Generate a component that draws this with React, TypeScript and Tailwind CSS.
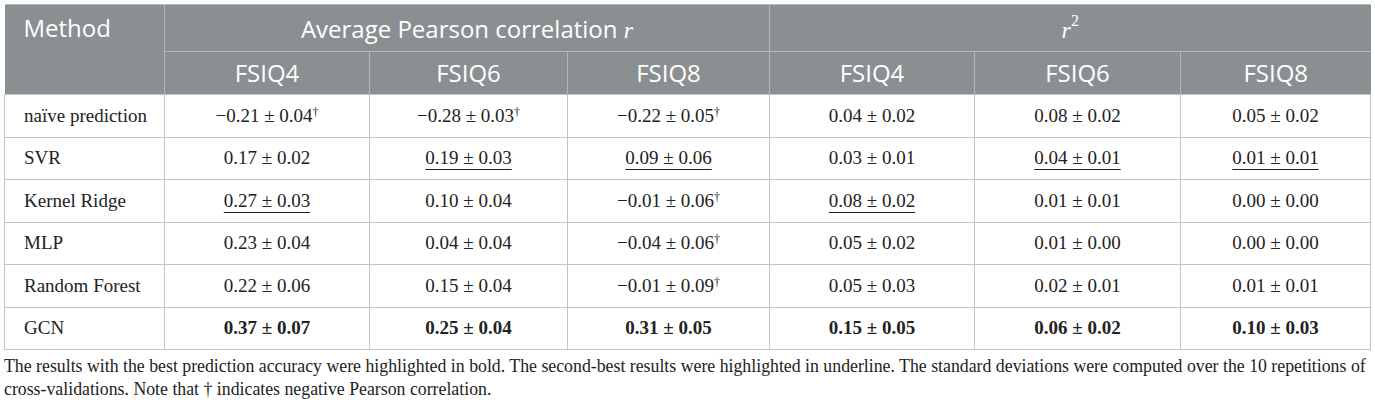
import React from "react";

type Cell = {
  v: string;
  dag?: boolean;
  u?: boolean;
};

type Row = {
  name: string;
  cells: Cell[];
  bold?: boolean;
};

const rows: Row[] = [
  {
    name: "naïve prediction",
    cells: [
      { v: "−0.21 ± 0.04", dag: true },
      { v: "−0.28 ± 0.03", dag: true },
      { v: "−0.22 ± 0.05", dag: true },
      { v: "0.04 ± 0.02" },
      { v: "0.08 ± 0.02" },
      { v: "0.05 ± 0.02" },
    ],
  },
  {
    name: "SVR",
    cells: [
      { v: "0.17 ± 0.02" },
      { v: "0.19 ± 0.03", u: true },
      { v: "0.09 ± 0.06", u: true },
      { v: "0.03 ± 0.01" },
      { v: "0.04 ± 0.01", u: true },
      { v: "0.01 ± 0.01", u: true },
    ],
  },
  {
    name: "Kernel Ridge",
    cells: [
      { v: "0.27 ± 0.03", u: true },
      { v: "0.10 ± 0.04" },
      { v: "−0.01 ± 0.06", dag: true },
      { v: "0.08 ± 0.02", u: true },
      { v: "0.01 ± 0.01" },
      { v: "0.00 ± 0.00" },
    ],
  },
  {
    name: "MLP",
    cells: [
      { v: "0.23 ± 0.04" },
      { v: "0.04 ± 0.04" },
      { v: "−0.04 ± 0.06", dag: true },
      { v: "0.05 ± 0.02" },
      { v: "0.01 ± 0.00" },
      { v: "0.00 ± 0.00" },
    ],
  },
  {
    name: "Random Forest",
    cells: [
      { v: "0.22 ± 0.06" },
      { v: "0.15 ± 0.04" },
      { v: "−0.01 ± 0.09", dag: true },
      { v: "0.05 ± 0.03" },
      { v: "0.02 ± 0.01" },
      { v: "0.01 ± 0.01" },
    ],
  },
  {
    name: "GCN",
    bold: true,
    cells: [
      { v: "0.37 ± 0.07" },
      { v: "0.25 ± 0.04" },
      { v: "0.31 ± 0.05" },
      { v: "0.15 ± 0.05" },
      { v: "0.06 ± 0.02" },
      { v: "0.10 ± 0.03" },
    ],
  },
];

const sub = ["FSIQ4", "FSIQ6", "FSIQ8", "FSIQ4", "FSIQ6", "FSIQ8"];

export default function App() {
  return (
    <div className="bg-white w-[1375px] h-[407px] pl-[4px] pt-[4px] text-[#222]">
      <table className="border-collapse table-fixed w-[1366px]">
        <colgroup>
          <col className="w-[160px]" />
          <col className="w-[205px]" />
          <col className="w-[198px]" />
          <col className="w-[202px]" />
          <col className="w-[205px]" />
          <col className="w-[206px]" />
          <col className="w-[190px]" />
        </colgroup>
        <thead className="bg-[#8a8f92] text-white font-['Open_Sans',sans-serif] text-[24px] leading-[36px]">
          <tr className="h-[47px]">
            <th
              rowSpan={2}
              className="align-top text-left font-normal pl-[19px] pt-[5px] border-t border-r border-[#b5b8ba]"
            >
              Method
            </th>
            <th colSpan={3} className="font-normal pt-[2px] border-t border-r border-b border-[#b5b8ba]">
              Average Pearson correlation{" "}
              <span className="font-['Liberation_Serif',serif] italic">r</span>
            </th>
            <th colSpan={3} className="font-normal pt-[2px] border-t border-b border-[#b5b8ba]">
              <span className="font-['Liberation_Serif',serif] italic">
                r
                <sup className="not-italic font-['Liberation_Serif',serif] text-[16px] top-[-0.7em]">
                  2
                </sup>
              </span>
            </th>
          </tr>
          <tr className="h-[43px]">
            {sub.map((s, i) => (
              <th
                key={i}
                className={`font-normal border-[#b5b8ba] ${i < 5 ? "border-r" : ""}`}
              >
                {s}
              </th>
            ))}
          </tr>
        </thead>
        <tbody className="font-['Liberation_Serif',serif] text-[19px]">
          {rows.map((r) => (
            <tr key={r.name} className="h-[42.5px]">
              <td className="border border-[#c4c4c4] pl-[19px] text-left">{r.name}</td>
              {r.cells.map((c, i) => (
                <td
                  key={i}
                  className={`border border-[#c4c4c4] text-center ${r.bold ? "font-bold" : ""}`}
                >
                  <span className={c.u ? "underline underline-offset-[5px] decoration-1" : ""}>
                    {c.v}
                  </span>
                  {c.dag && <sup className="text-[12px]">†</sup>}
                </td>
              ))}
            </tr>
          ))}
        </tbody>
      </table>
      <p className="font-['Liberation_Serif',serif] text-[17.8px] leading-[23px] mt-[5px] w-[1370px]">
        The results with the best prediction accuracy were highlighted in bold. The second-best
        results were highlighted in underline. The standard deviations were computed over the 10
        repetitions of cross-validations. Note that † indicates negative Pearson correlation.
      </p>
    </div>
  );
}
